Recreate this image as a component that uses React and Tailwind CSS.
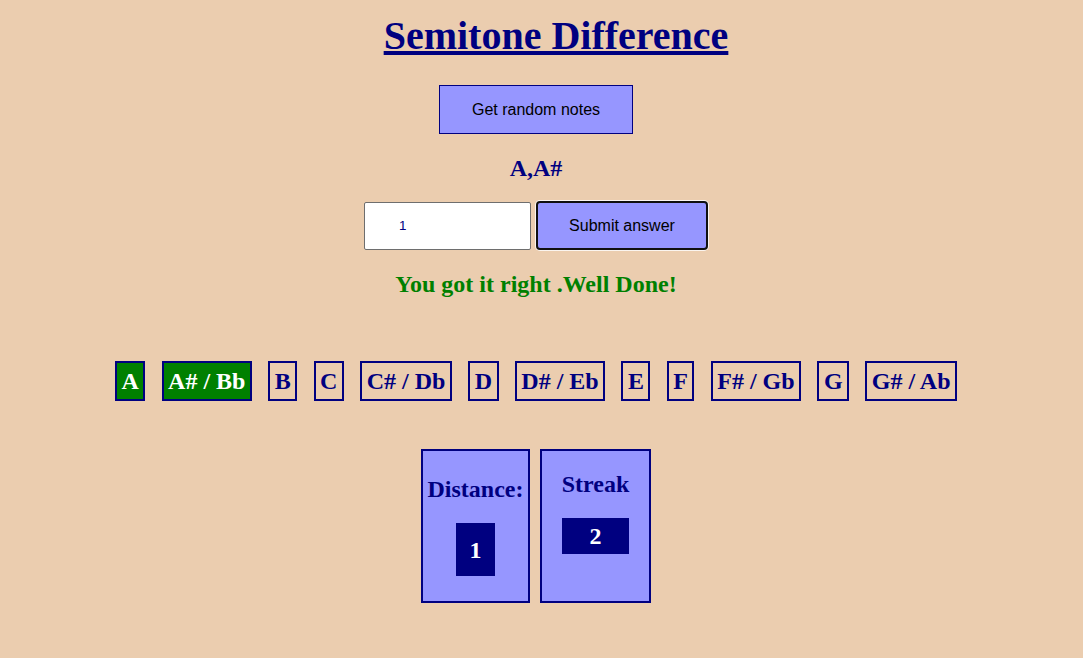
const NOTES = ['A', 'A# / Bb', 'B', 'C', 'C# / Db', 'D', 'D# / Eb', 'E', 'F', 'F# / Gb', 'G', 'G# / Ab'];
const PICKED = ['A', 'A# / Bb'];

const serif = "font-['Liberation_Serif',serif]";
const sans = "font-['Liberation_Sans',Arial,sans-serif]";

export default function App() {
  return (
    <div className={`min-h-[658px] w-full bg-[#ebcdaf] ${serif}`}>
      <div className="w-[1072px] flex flex-col items-center">
        <h1 className="mt-[13px] ml-[40px] text-[40px] leading-[46px] font-bold text-[#000080] underline">
          Semitone Difference
        </h1>

        <button className={`mt-[26px] w-[194px] h-[49px] bg-[#9696ff] border border-[#000080] text-[16px] text-black ${sans}`}>
          Get random notes
        </button>

        <h2 className="mt-[20px] text-[24px] leading-[28px] font-bold text-[#000080]">A,A#</h2>

        <div className="mt-[19px] flex items-center gap-[5px] h-[49px]">
          <input
            readOnly
            defaultValue="1"
            className={`w-[167px] h-[48px] bg-white border border-[#6e6e6e] rounded-[2px] pl-[34px] text-[13.33px] text-[#000080] outline-none ${sans}`}
          />
          <button className={`w-[172px] h-[49px] bg-[#9696ff] border-2 border-[#101010] rounded-[4px] shadow-[0_0_0_1px_rgba(255,255,255,0.8)] text-[16px] text-black ${sans}`}>
            Submit answer
          </button>
        </div>

        <p className="mt-[20px] text-[24px] leading-[28px] font-bold text-[#008000]">
          You got it right .Well Done!
        </p>

        <div className="mt-[63px] flex gap-[16.3px]">
          {NOTES.map((n) => {
            const on = PICKED.includes(n);
            return (
              <div
                key={n}
                className={`border-2 border-[#000080] px-[4.5px] py-[4px] text-[24px] leading-[28px] font-bold whitespace-pre ${
                  on ? 'bg-[#008000] text-white' : 'text-[#000080]'
                }`}
              >
                {n}
              </div>
            );
          })}
        </div>

        <div className="mt-[48px] flex gap-[10px]">
          <div className="w-[109px] h-[154px] bg-[#9696ff] border-2 border-[#000080] flex flex-col items-center pt-[24px]">
            <h3 className="text-[24px] leading-[28px] font-bold text-[#000080]">Distance:</h3>
            <div className="mt-[20px] w-[39px] h-[53px] bg-[#000080] flex items-center justify-center text-white text-[24px] font-bold">
              1
            </div>
          </div>
          <div className="w-[111px] h-[154px] bg-[#9696ff] border-2 border-[#000080] flex flex-col items-center pt-[19px]">
            <h3 className="text-[24px] leading-[28px] font-bold text-[#000080]">Streak</h3>
            <div className="mt-[20px] w-[67px] h-[36px] bg-[#000080] flex items-center justify-center text-white text-[24px] font-bold">
              2
            </div>
          </div>
        </div>
      </div>
    </div>
  );
}
